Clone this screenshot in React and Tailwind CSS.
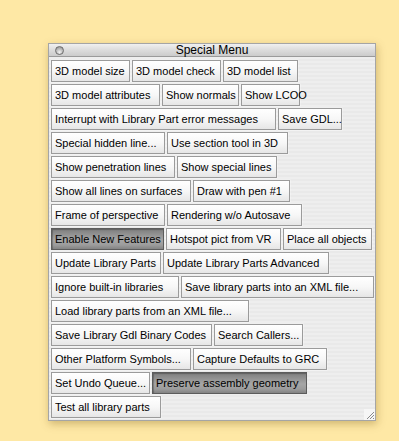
import React from "react";

const rows = [
  [["3D model size", 79], ["3D model check", 89], ["3D model list", 75]],
  [["3D model attributes", 109], ["Show normals", 77], ["Show LCOO", 59]],
  [["Interrupt with Library Part error messages", 225], ["Save GDL...", 64]],
  [["Special hidden line...", 114], ["Use section tool in 3D", 121]],
  [["Show penetration lines", 124], ["Show special lines", 100]],
  [["Show all lines on surfaces", 140], ["Draw with pen #1", 97]],
  [["Frame of perspective", 114], ["Rendering w/o Autosave", 135]],
  [["Enable New Features", 113, true], ["Hotspot pict from VR", 115], ["Place all objects", 89]],
  [["Update Library Parts", 110], ["Update Library Parts Advanced", 166]],
  [["Ignore built-in libraries", 128], ["Save library parts into an XML file...", 193]],
  [["Load library parts from an XML file...", 198]],
  [["Save Library Gdl Binary Codes", 161], ["Search Callers...", 89]],
  [["Other Platform Symbols...", 140], ["Capture Defaults to GRC", 134]],
  [["Set Undo Queue...", 99], ["Preserve assembly geometry", 155, true]],
  [["Test all library parts", 110]],
];

function Btn({ label, w, dark }) {
  return (
    <div
      style={{ width: w }}
      className={
        "h-[22px] shrink-0 flex items-center pl-[3px] whitespace-nowrap text-[11px] leading-none text-black border " +
        (dark
          ? "border-[#5c5c5c] bg-[linear-gradient(to_bottom,#7e7e7e,#a6a6a6_55%,#9c9c9c_80%,#838383)] shadow-[inset_1px_1px_1px_rgba(0,0,0,0.25)]"
          : "border-[#9b9b9b] bg-[linear-gradient(to_bottom,#ffffff,#f7f7f7_50%,#e6e6e6)] shadow-[0_0_0_0.5px_rgba(255,255,255,0.6)]")
      }
    >
      {label}
    </div>
  );
}

export default function App() {
  return (
    <div
      className="w-[399px] h-[441px] bg-[#fee8a5] pl-[48px] pt-[43px]"
      style={{ fontFamily: '"Liberation Sans", Arial, sans-serif' }}
    >
      <div className="w-[328px] border border-[#a5a5a5] shadow-[1px_3px_8px_rgba(120,90,20,0.35)]">
        <div className="relative h-[13px] border-b border-[#9a9a9a] bg-[linear-gradient(to_bottom,#f0f0f0,#dcdcdc_50%,#cbcbcb)] flex items-center justify-center">
          <div className="absolute left-[6px] top-[2px] w-[9px] h-[9px] rounded-full border border-[#6d6d6d] bg-[radial-gradient(circle_at_50%_75%,#f4f4f4,#b8b8b8_55%,#8a8a8a)]" />
          <span className="text-[12px] leading-none text-black">Special Menu</span>
        </div>
        <div className="relative flex flex-col gap-[2px] pl-[2px] pt-[3px] pb-[2px] bg-[repeating-linear-gradient(to_bottom,#eeeeee_0px,#eeeeee_2px,#e9e9e9_2px,#e9e9e9_4px)]">
          {rows.map((r, i) => (
            <div key={i} className="flex gap-[2px]">
              {r.map(([l, w, d]) => (
                <Btn key={l} label={l} w={w} dark={d} />
              ))}
            </div>
          ))}
          <svg
            className="absolute right-0 bottom-0"
            width="11"
            height="11"
            viewBox="0 0 11 11"
          >
            <rect width="11" height="11" fill="#f6f6f6" />
            <path d="M3 10 L10 3 M6 10 L10 6 M9 10 L10 9" stroke="#8a8a8a" strokeWidth="1" />
          </svg>
        </div>
      </div>
    </div>
  );
}
